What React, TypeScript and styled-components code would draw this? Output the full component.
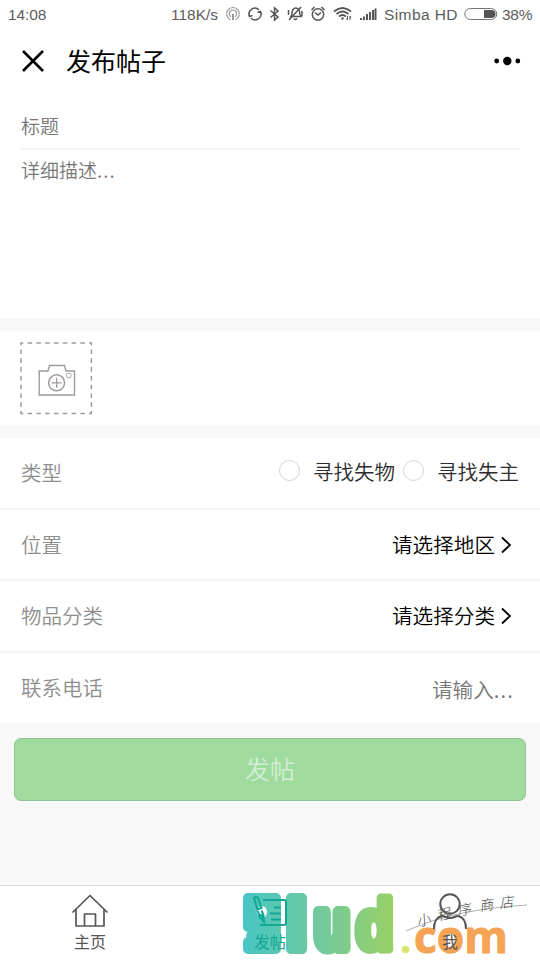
import React from "react";
import styled, { createGlobalStyle } from "styled-components";

const GlobalStyle = createGlobalStyle`
  * { box-sizing: border-box; }
  body {
    margin: 0;
    background: #f8f8f8;
    font-family: "Noto Sans CJK SC", sans-serif;
    font-weight: 350;
  }
`;

const Page = styled.div`
  width: 540px;
  height: 960px;
  display: flex;
  flex-direction: column;
  background: #f8f8f8;
  overflow: hidden;
`;

const StatusBar = styled.header`
  height: 28px;
  flex: none;
  display: flex;
  align-items: center;
  justify-content: space-between;
  padding: 1px 8px 0;
  background: #fff;
  color: #5c5c5c;
  font: 400 15.5px/28px "Liberation Sans", sans-serif;
`;

const StatusText = styled.span<{ $width: number; $spacing?: number }>`
  width: ${(p) => p.$width}px;
  letter-spacing: ${(p) => p.$spacing ?? 0}px;
  white-space: nowrap;
`;

const StatusGroup = styled.div`
  display: flex;
  align-items: center;
`;

const StatusIcons = styled.svg`
  display: block;
  width: 160px;
  height: 28px;
  margin: -1px 4px 0 0;
`;

const Battery = styled.svg`
  display: block;
  width: 34px;
  height: 14px;
  margin: -2px 4px 0 6px;
`;

const NavBar = styled.nav`
  height: 66px;
  flex: none;
  display: flex;
  align-items: center;
  padding: 0 19px 0 21px;
  background: #fff;
`;

const NavTitle = styled.h1`
  flex: 1;
  margin: -2px 0 0 20px;
  font-size: 25px;
  font-weight: 400;
  line-height: 36px;
  color: #000;
`;

const Section = styled.section<{ $height: number; $gap?: number }>`
  flex: none;
  height: ${(p) => p.$height}px;
  margin-bottom: ${(p) => p.$gap ?? 0}px;
  padding: 0 20px;
  background: #fff;
`;

const TitleField = styled.div`
  height: 56px;
  padding: 10px 1px 0;
  border-bottom: 2px solid #f6f6f6;
  font-size: 19px;
  line-height: 44px;
  color: #777;
`;

const Description = styled.div`
  padding: 6px 1px 0;
  font-size: 19px;
  line-height: 28px;
  color: #777;
`;

const Dots = styled.span<{ $spacing: number }>`
  letter-spacing: ${(p) => p.$spacing}px;
`;

const Upload = styled.div`
  padding-top: 11px;
  svg { display: block; }
`;

const FormRow = styled.div<{ $last?: boolean }>`
  height: ${(p) => (p.$last ? 70 : 71.7)}px;
  flex: none;
  display: flex;
  align-items: center;
  justify-content: space-between;
  padding: 0 20px 2px 21px;
  background: #fff;
  border-bottom: ${(p) => (p.$last ? "none" : "2px solid #f6f6f6")};
`;

const Label = styled.span`
  font-size: 20.5px;
  line-height: 30px;
  color: #8e8e8e;
`;

const Value = styled.div<{ $placeholder?: boolean }>`
  display: flex;
  align-items: center;
  padding: ${(p) => (p.$placeholder ? "4px 6px 0 0" : "0 8px 0 0")};
  font-size: 20.6px;
  line-height: 30px;
  color: ${(p) => (p.$placeholder ? "#777" : "#000")};
  svg { display: block; margin: 2px 0 0 6px; }
`;

const RadioGroup = styled.div`
  display: flex;
  align-items: center;
  gap: 8px;
  margin: -2px 1px 0 0;
`;

const Radio = styled.label`
  display: flex;
  align-items: center;
  font-size: 20.5px;
  line-height: 30px;
  color: #2c2c2c;
`;

const RadioDot = styled.i`
  width: 21px;
  height: 21px;
  margin: -1px 13px 0 0;
  border: 1px solid #d3d3d3;
  border-radius: 50%;
`;

const Submit = styled.button`
  flex: none;
  height: 63px;
  margin: 15px 14px 0;
  padding: 0 0 3px;
  border: 1px solid #8fc590;
  border-radius: 7px;
  background: #9fdb9f;
  font: 350 25px/36px "Noto Sans CJK SC", sans-serif;
  color: #d3efd3;
`;

const TabBar = styled.footer`
  position: relative;
  height: 75px;
  flex: none;
  margin-top: auto;
  display: grid;
  grid-template-columns: repeat(3, 1fr);
  background: #fff;
  border-top: 1px solid #dedede;
`;

const Tab = styled.div<{ $active?: boolean }>`
  position: relative;
  display: flex;
  flex-direction: column;
  align-items: center;
  padding-top: 6px;
  font-size: 16px;
  font-weight: 400;
  line-height: 20px;
  color: ${(p) => (p.$active ? "#0fa894" : "#555")};
  svg { display: block; }
`;

const Watermark = styled.svg`
  position: absolute;
  left: 240px;
  top: -1px;
  width: 300px;
  height: 75px;
`;

const Chevron = () => (
  <svg width="11" height="18" viewBox="0 0 11 18" fill="none" stroke="#000" strokeWidth="1.8">
    <path d="M1 1.5 9 9 1 16.5" />
  </svg>
);

const WatermarkLogo = () => (
  <Watermark viewBox="240 885 300 75" aria-hidden="true">
    <defs>
      <linearGradient id="brand" gradientUnits="userSpaceOnUse" x1="243" y1="0" x2="393" y2="0">
        <stop offset="0" stopColor="#48c5c5" />
        <stop offset="0.5" stopColor="#70c99d" />
        <stop offset="1" stopColor="#99d067" />
      </linearGradient>
      <mask id="letters" maskUnits="userSpaceOnUse" x="240" y="885" width="160" height="75">
        <g fill="#fff">
          <rect x="243" y="893" width="38" height="39" rx="5" />
          <rect x="262" y="910" width="19" height="44" rx="5" />
          <rect x="243" y="937" width="34" height="17" rx="5" />
          <rect x="286" y="893" width="21" height="61" rx="5" />
        </g>
        <g fill="#fff" stroke="#fff" strokeLinejoin="round" fontFamily="Liberation Sans" fontWeight="700">
          <text transform="translate(248.5 945.5) scale(.76 1)" fontSize="64" strokeWidth="12">9</text>
          <text transform="translate(288.5 944.5) scale(.46 1)" fontSize="60" strokeWidth="18">1</text>
          <text transform="translate(314.5 947.500) scale(.84 1)" fontSize="68" strokeWidth="12">u</text>
          <text transform="translate(355.8 949) scale(.88 1)" fontSize="70" strokeWidth="9">d</text>
        </g>
        <ellipse cx="262" cy="912" rx="5" ry="6" fill="#000" />
      </mask>
    </defs>
    <rect x="240" y="885" width="160" height="75" fill="url(#brand)" mask="url(#letters)" />
    <circle cx="405.500" cy="949.500" r="3.800" fill="#d9e56c" />
    <text x="414" y="953" textLength="94" lengthAdjust="spacingAndGlyphs" fontFamily="Open Sans" fontSize="45" fontWeight="700" fill="#f4a454" stroke="#f4a454" strokeWidth="1">com</text>
    <path d="M406 931 Q455 909 527 905" fill="none" stroke="#999" strokeWidth=".8" />
    <g fontFamily="Noto Sans CJK SC" fontSize="14" fontWeight="300" fill="#444">
      <text transform="translate(418 927) rotate(-16) skewX(-12)">小</text>
      <text transform="translate(438 921) rotate(-14) skewX(-12)">程</text>
      <text transform="translate(458 916) rotate(-10) skewX(-12)">序</text>
      <text transform="translate(480 911) rotate(-8) skewX(-12)">商</text>
      <text transform="translate(500 908) rotate(-6) skewX(-12)">店</text>
    </g>
  </Watermark>
);

export default function App() {
  return (
    <>
      <GlobalStyle />
      <Page>
        <StatusBar>
          <StatusText $width={40} $spacing={-0.1}>14:08</StatusText>
          <StatusGroup>
            <StatusText $width={49}>118K/s</StatusText>
            <StatusIcons viewBox="220 0 160 28" fill="none" stroke="#555" strokeWidth="1.5">
              <g stroke="#999" strokeWidth="1.2">
                <path d="M230.500 19.600a6.300 6.300 0 1 1 5 0M231 16.800a3.700 3.700 0 1 1 4 0" />
                <path d="M233 14v6" strokeWidth="2" />
              </g>
              <path d="M249.500 16a5.800 5.800 0 0 1 9.500-6.200M260.500 12a5.800 5.800 0 0 1-9.500 6.200M248.500 13.500l1 3 3-1M261.500 14.500l-1-3-3 1" />
              <path d="M270.500 10.500 278 17l-3.500 3v-12l3.500 3-7.500 6.500" />
              <path d="M291 16.500c1.500-1.500.5-5 2-7 2-2.500 6-1.500 6.500 1.500.3 2 0 4 1.500 5.500zM294 18.500q1.500 2 3 0M289 20 301 7M288.500 10v5M302 11v5" />
              <circle cx="318" cy="14.500" r="5.700" />
              <path d="m315 12.500 3 2.500 3-2.500M311.500 10l3-3M324.500 10l-3-3" />
              <path d="M334 11.500q8.500-7 17 0M336.500 14q6-5 12 0M339 16.500q3.500-3 7 0" strokeWidth="1.7" />
              <circle cx="342.500" cy="18.500" r="1.200" fill="#555" stroke="none" />
              <path d="M347.500 16v4M346.500 18.500l1 1.500M350 20v-4M351 17.500l-1-1.500" strokeWidth="1" />
              <path d="M361 20v-2M364 20v-3.500M367 20v-6M370 20v-8M373 20V10M375.500 20V8.500" strokeWidth="2" />
            </StatusIcons>
            <StatusText $width={74} $spacing={0.4}>Simba HD</StatusText>
            <Battery viewBox="0 0 34 14">
              <rect x=".8" y="1.500" width="32" height="11" rx="5.500" fill="none" stroke="#777" />
              <path d="M20 3h7.500a4 4 0 0 1 0 8H20z" fill="#555" />
            </Battery>
            <StatusText $width={30} $spacing={-0.3}>38%</StatusText>
          </StatusGroup>
        </StatusBar>

        <NavBar>
          <svg width="25" height="24" viewBox="0 0 25 24" stroke="#000" strokeWidth="2.600">
            <path d="M2 2 22 22M22 2 2 22" />
          </svg>
          <NavTitle>发布帖子</NavTitle>
          <svg width="27" height="12" viewBox="0 0 27 12">
            <circle cx="2.700" cy="6" r="2.400" />
            <circle cx="13.300" cy="6" r="4.200" />
            <circle cx="23.800" cy="6" r="2.400" />
          </svg>
        </NavBar>

        <Section $height={224} $gap={13}>
          <TitleField>标题</TitleField>
          <Description>详细描述<Dots $spacing={1.1}>...</Dots></Description>
        </Section>

        <Section $height={94} $gap={13}>
          <Upload>
            <svg width="73" height="73" viewBox="0 0 73 73" fill="none" stroke="#a19a9b">
              <rect x="1" y="1" width="70.400" height="70.400" strokeWidth="1.500" strokeDasharray="4.600 4.200" strokeDashoffset="2.300" />
              <path d="M19.200 53V29H28l1.500-5.500h15L46 29h8.500v24z" strokeWidth="1.400" />
              <circle cx="36.600" cy="40.800" r="8" strokeWidth="1.500" />
              <path d="M31.600 40.800h10M36.600 35.800v10" strokeWidth="1.200" />
              <circle cx="48.800" cy="33.500" r="2.400" strokeWidth=".9" />
            </svg>
          </Upload>
        </Section>

        <FormRow>
          <Label>类型</Label>
          <RadioGroup>
            <Radio><RadioDot />寻找失物</Radio>
            <Radio><RadioDot />寻找失主</Radio>
          </RadioGroup>
        </FormRow>
        <FormRow>
          <Label>位置</Label>
          <Value>请选择地区<Chevron /></Value>
        </FormRow>
        <FormRow>
          <Label>物品分类</Label>
          <Value>请选择分类<Chevron /></Value>
        </FormRow>
        <FormRow $last>
          <Label>联系电话</Label>
          <Value $placeholder>请输入<Dots $spacing={1.2}>...</Dots></Value>
        </FormRow>

        <Submit>发帖</Submit>

        <TabBar>
          <WatermarkLogo />
          <Tab>
            <svg width="40" height="39" viewBox="0 0 40 39" fill="none" stroke="#555" strokeWidth="1.700">
              <path d="M2.500 20.500 20 3.500l17.500 17M6 17.500V34h28V17.500M14.500 34V22h11v12" strokeLinejoin="round" />
            </svg>
            主页
          </Tab>
          <Tab $active>
            <svg width="40" height="39" viewBox="0 0 40 39" fill="none" stroke="#0fa894" strokeWidth="2">
              <path d="M13 8h21q2 0 2 2v21q0 2-2 2H10M24 15.500h7M20 21.500h11M21 27.500h10" />
              <path d="M4 6q2-2 4 0l3.500 10-4 1.500zM8 19l1.500 6 4.500 5-.5-7-2-4.500" />
              <path d="m8.500 21.500 5 1 .5 7.500z" fill="#0fa894" stroke="none" />
            </svg>
            发帖
          </Tab>
          <Tab>
            <svg width="40" height="39" viewBox="0 0 40 39" fill="none" stroke="#555" strokeWidth="2">
              <circle cx="20" cy="12" r="9.700" />
              <path d="M4 37c0-7 3-12 8-13 2-.3 4 2 8 2s6-2.300 8-2c5 1 8 6 8 13" />
            </svg>
            我
          </Tab>
        </TabBar>
      </Page>
    </>
  );
}
